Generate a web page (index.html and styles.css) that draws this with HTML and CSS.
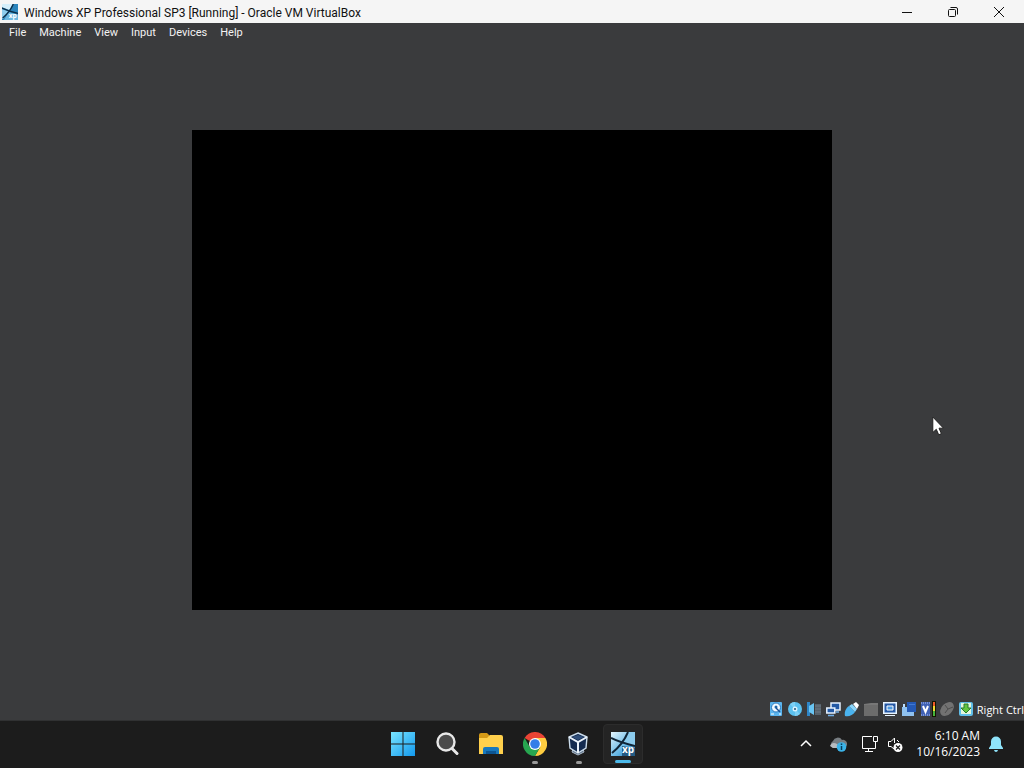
FILE: index.html
```html
<!DOCTYPE html>
<html lang="en">
<head>
    <meta charset="UTF-8">
    <title>Windows XP Professional SP3 [Running] - Oracle VM VirtualBox</title>
    <link rel="stylesheet" href="styles.css">
</head>
<body>
<div class="window">
    <header class="titlebar">
        <svg class="logo" viewBox="0 0 24 24">
            <path fill="#2b84bb" d="M0 0h24v24H0z"/>
            <path fill="#d5effb" d="M0 0h16l-5 9-11-4z"/>
            <path fill="#8fcdec" d="M0 8l9 3-7 11H0z"/>
            <path fill="#6db8e0" d="M10 12l14 4v8H3z"/>
            <path stroke="#0d2c45" stroke-width="2" fill="none" d="M0 6q10 5 24 8M17 0Q12 12 1 21"/>
            <text class="xp" x="10" y="21">xp</text>
        </svg>
        <h1>Windows XP Professional SP3 [Running] - Oracle VM VirtualBox</h1>
        <div class="controls">
            <button aria-label="Minimize"><svg viewBox="0 0 12 12"><path d="M1 6.5h10"/></svg></button>
            <button aria-label="Restore"><svg viewBox="0 0 12 12"><rect x="1.5" y="3.5" width="7" height="7" rx="1"/><path d="M3.5 1.5H9q1.5 0 1.5 1.5v5.5"/></svg></button>
            <button aria-label="Close"><svg viewBox="0 0 12 12"><path d="M1 1l10 10M11 1L1 11"/></svg></button>
        </div>
    </header>
    <nav class="menu">
        <a href="#">File</a>
        <a href="#">Machine</a>
        <a href="#">View</a>
        <a href="#">Input</a>
        <a href="#">Devices</a>
        <a href="#">Help</a>
    </nav>
    <main class="view">
        <div class="screen"></div>
        <svg class="cursor" viewBox="0 0 12 20"><path fill="#fff" stroke="#222" stroke-width="1" d="M.8 1v15.5l3.5-3.2 2.4 5.5 2.7-1.2L7 12.2h4.5z"/></svg>
    </main>
    <footer class="status">
        <!-- hard disk -->
        <svg viewBox="0 0 16 16"><rect x="2" y="1" width="12" height="14" rx="1" fill="#5ab4ee"/><circle cx="8" cy="6.5" r="4.5" fill="#f2faff" stroke="#2b79bd"/><circle cx="8" cy="6" r="1.5" fill="#1d65a8"/><path d="M8 7l4 4" stroke="#1d4f90" stroke-width="1.5" fill="none"/><path d="M3 13h3M11 13h2" stroke="#fff"/></svg>
        <!-- optical disk -->
        <svg viewBox="0 0 16 16"><circle cx="8" cy="8" r="7" fill="#5cc1f0"/><path d="M8 8L3 3a7 7 0 0 1 5-2zM8 8l5 5a7 7 0 0 1-5 2z" fill="#7dd0f6"/><circle cx="8" cy="8" r="2.5" fill="#d9f3ff"/><circle cx="8" cy="8" r="1" fill="#205276"/></svg>
        <!-- audio -->
        <svg viewBox="0 0 16 16"><path d="M1 1h3v14H1z" fill="#2e86c8"/><path d="M3 5l5-3v12l-5-3z" fill="#69c5f3"/><path d="M9 3h6v11H9z" fill="#56616a"/><path d="M9 5h6M9 8h6M9 11h6" stroke="#6d7983"/></svg>
        <!-- network -->
        <svg viewBox="0 0 16 16"><path d="M6 2h9v7H6z" fill="#2359a5" stroke="#e6f2ff" stroke-width="1.5"/><path d="M1.8 7h8v5h-8z" fill="#2359a5" stroke="#e6f2ff" stroke-width="1.5"/><path d="M3 14.5h6M11 11h3" stroke="#71aee8" stroke-width="1.5"/></svg>
        <!-- usb -->
        <svg viewBox="0 0 16 16"><path d="M1 15c-1-4 1-8 4-10l6 6c-2 3-6 5-10 4z" fill="#4ab3ef"/><path d="M5 5l3-2 5 5-2 3z" fill="#88d4fa"/><path d="M9 3l3-2 3 3-2 4z" fill="#fff"/></svg>
        <!-- shared folders -->
        <svg viewBox="0 0 16 16"><path d="M1 3l7-1h7v13H1z" fill="#777"/><path d="M1 4h14v11H1z" fill="#6c6c6c"/></svg>
        <!-- display -->
        <svg viewBox="0 0 16 16"><path d="M1 1h14v12H1zM3 14h10v1H3z" fill="#e8f4ff"/><path d="M2.5 2.5h11v9h-11z" fill="#2458a5"/><path d="M5 5h6v4H5z" fill="#4d9ae0" stroke="#fff"/></svg>
        <!-- recording -->
        <svg viewBox="0 0 16 16"><path d="M1 6h12v9H1z" fill="#90c2f0"/><path d="M6 1h9v10H6z" fill="#2459b5"/><path d="M2 3h2v3H2z" fill="#bddfff"/><path d="M8 3h6v1H8z" fill="#4279d0"/></svg>
        <!-- features and cpu load -->
        <svg viewBox="0 0 16 16"><path d="M1 1h9v14H1z" fill="#4061b5"/><path d="M1 2h9M1 14h9" stroke="#b0c3ee" stroke-dasharray="1 1"/><path d="M3 5l2.5 6L8 5" stroke="#fff" stroke-width="2" fill="none"/><path d="M12 0h4v16h-4z" fill="#151500"/><path d="M13 1h2v5h-2z" fill="#f05a28"/><path d="M13 5h2v5h-2z" fill="#f1da32"/><path d="M13 10h2v5h-2z" fill="#46b43c"/></svg>
        <!-- mouse integration -->
        <svg viewBox="0 0 16 16"><ellipse cx="8" cy="8" rx="8" ry="5.5" transform="rotate(-45 8 8)" fill="#727272"/><path d="M6 4l3 4 5-2M9 8l-3 4" stroke="#4d4d4d" fill="none"/></svg>
        <!-- keyboard capture -->
        <svg viewBox="0 0 16 16"><rect x="1" y="1" width="14" height="14" rx="2" fill="#60bee9"/><rect x="3" y="2" width="10" height="11" fill="#e4f6dd"/><path d="M6 3h4v4h3l-5 5-5-5h3z" fill="#62c43f" stroke="#267b2a"/></svg>
        <span>Right Ctrl</span>
    </footer>
</div>

<div class="taskbar">
    <div class="apps">
        <button aria-label="Start">
            <svg viewBox="0 0 24 24">
                <defs><linearGradient id="win" x1="0" y1="0" x2="24" y2="24" gradientUnits="userSpaceOnUse"><stop stop-color="#79e5ff"/><stop offset="1" stop-color="#1298ed"/></linearGradient></defs>
                <path fill="url(#win)" d="M0 0h11.5v11.5H0zM12.5 0H24v11.5H12.5zM0 12.5h11.5V24H0zM12.5 12.5H24V24H12.5z"/>
            </svg>
        </button>
        <button aria-label="Search">
            <svg viewBox="0 0 24 24"><circle cx="11" cy="10" r="8.5" fill="#4b4b4b" stroke="#e8e8e8" stroke-width="2.4"/><path d="M17 16.5l5 5" stroke="#e8e8e8" stroke-width="3" stroke-linecap="round"/></svg>
        </button>
        <button aria-label="File Explorer">
            <svg viewBox="0 0 24 24">
                <path fill="#d59a16" d="M0 3q0-2 2-2h6l3 3v4H0z"/>
                <path fill="#ffd04c" d="M0 6h8l3-3h11q2 0 2 2v17H0z"/>
                <path fill="#1778bd" d="M4 22v-5q0-2 2-2h12q2 0 2 2v5z"/>
                <path fill="#0c5593" d="M7 19h10v3H7z"/>
            </svg>
        </button>
        <button class="running" aria-label="Google Chrome">
            <svg viewBox="0 0 24 24">
                <path fill="#e94435" d="M12 12L1.6 6A12 12 0 0 1 22.4 6z"/>
                <path fill="#ffcd40" d="M12 12V6h10.4A12 12 0 0 1 12 24l5.2-9z"/>
                <path fill="#27a650" d="M12 12l5.2 3L12 24A12 12 0 0 1 1.6 6l5.2 9z"/>
                <circle cx="12" cy="12" r="6" fill="#fff"/><circle cx="12" cy="12" r="4.8" fill="#347de8"/>
            </svg>
        </button>
        <button class="running" aria-label="Oracle VM VirtualBox">
            <svg viewBox="0 0 24 24">
                <path d="M6 17l-1 3 6 3 6-3-1-3" fill="#5e7289" stroke="#aab8c8"/>
                <path d="M11 1l9 4-1 11-8 5-8-5L2 5z" fill="#142b50" stroke="#cbdceb" stroke-width="1.4"/>
                <path d="M2 5l9 5 9-5M11 10v11" fill="none" stroke="#e9f2fa" stroke-width="2"/>
                <path d="M5 5l6-2 6 2-6 3z" fill="#304f7b"/>
            </svg>
        </button>
        <button class="running active" aria-label="Windows XP Professional SP3">
            <svg viewBox="0 0 24 24">
                <defs><linearGradient id="xp" x1="0" y1="0" x2="24" y2="24" gradientUnits="userSpaceOnUse"><stop stop-color="#e5f7ff"/><stop offset=".6" stop-color="#63b5e4"/><stop offset="1" stop-color="#1d70aa"/></linearGradient></defs>
                <path fill="url(#xp)" d="M0 0h24v24H0z"/>
                <path fill="#8bcbed" d="M17 0h7v14l-12-4z"/>
                <path stroke="#102537" stroke-width="2" fill="none" d="M0 6q10 5 24 8M17 0Q12 12 1 21"/>
                <path fill="#245b84" d="M11 14l13 2v8H11z"/>
                <text class="xp" x="11" y="21">xp</text>
            </svg>
        </button>
    </div>
    <div class="tray">
        <button aria-label="Show hidden icons"><svg viewBox="0 0 18 18"><path d="M4 11l5-5 5 5" fill="none" stroke="#fff" stroke-width="1.5"/></svg></button>
        <button class="cloud" aria-label="OneDrive"><svg viewBox="0 0 18 18"><path d="M4 13a4 4 0 0 1 0-7 5 5 0 0 1 9-1 4 4 0 0 1 2 8z" fill="#777d82"/><path d="M1 11c1-3 4-4 7-2l4 4H4z" fill="#b8bcc0"/><circle cx="12.5" cy="12" r="4.8" fill="#3bb3e8"/><path d="M12.5 11v4M12.5 8.5V10" stroke="#073c5b" stroke-width="1.5"/></svg></button>
        <button aria-label="Network"><svg viewBox="0 0 18 18"><path d="M11 1.5H1.5v12H14.5V8M7.5 13.5v3M4 16.5h8M12.5 1.5h4v5h-4zM14.5 6.5v3" fill="none" stroke="#fff"/></svg></button>
        <button aria-label="Volume"><svg viewBox="0 0 18 18"><path d="M8 14L5 11.5H2.500v-5H5L8.5 3v5M11 5l2 2" fill="none" stroke="#fff"/><circle cx="12" cy="12.5" r="4.5" fill="#fff"/><path d="M10 10.5l4 4M14 10.5l-4 4" stroke="#1c1c1c" stroke-width="1.2"/></svg></button>
        <button class="clock"><time>6:10 AM<br>10/16/2023</time></button>
        <button class="bell" aria-label="Notifications"><svg viewBox="0 0 18 18"><path d="M9 1.5a5 5 0 0 1 5 5V10l2 3v1H2v-1l2-3V6.5a5 5 0 0 1 5-5zM7 15h4q-.5 2-2 2t-2-2z" fill="#8fe3fa"/></svg></button>
    </div>
</div>
</body>
</html>
```
FILE: styles.css
```css
*{
    box-sizing: border-box;
}
body{
    margin: 0;
    height: 100vh;
    display: flex;
    flex-direction: column;
    overflow: hidden;
    background: #3a3b3d;
    color: #fff;
    font-family: "Open Sans", "Noto Sans", sans-serif;
}
button{
    display: flex;
    align-items: center;
    justify-content: center;
    padding: 0;
    border: 0;
    background: none;
    color: inherit;
    font: inherit;
}
svg{
    display: block;
    flex: none;
}
.xp{
    font: bold 10px "Open Sans", sans-serif;
    fill: #fff;
}
.window{
    flex: 1;
    display: flex;
    flex-direction: column;
}
.titlebar{
    display: flex;
    align-items: center;
    height: 23px;
    padding-left: 2px;
    background: #f5f5f5;
    color: #111;
}
.logo{
    width: 16px;
    height: 16px;
}
.titlebar h1{
    flex: 1;
    margin: 0 0 0 6px;
    font-family: Roboto, sans-serif;
    font-size: 12px;
    font-weight: 400;
    line-height: 16px;
    padding-top: 2px;
}
.controls{
    display: flex;
    height: 20px;
    padding-right: 2px;
}
.controls button{
    width: 46px;
}
.controls svg{
    width: 12px;
    height: 12px;
    fill: none;
    stroke: #111;
}
.menu{
    display: flex;
    gap: 13px;
    height: 19px;
    padding-left: 9px;
    font-family: Roboto, sans-serif;
    font-size: 11px;
    line-height: 20px;
}
.menu a{
    color: #f2f2f2;
    text-decoration: none;
}
.view{
    position: relative;
    flex: 1;
    display: flex;
    align-items: center;
    justify-content: center;
}
.screen{
    width: 62.5%;
    aspect-ratio: 4 / 3;
    background: #000;
}
.cursor{
    position: absolute;
    left: 91%;
    top: 57%;
    width: 12px;
    height: 20px;
}
.status{
    display: flex;
    align-items: center;
    justify-content: flex-end;
    gap: 3px;
    height: 22px;
    font-size: 11px;
}
.status svg{
    width: 16px;
    height: 16px;
}
.taskbar{
    display: grid;
    grid-template-columns: 1fr auto 1fr;
    align-items: center;
    height: 48px;
    padding-bottom: 1px;
    border-top: 1px solid #303132;
    background: #1c1c1c;
}
.apps{
    grid-column: 2;
    display: flex;
    gap: 4px;
    padding-left: 2px;
}
.apps button{
    position: relative;
    width: 40px;
    height: 40px;
    border-radius: 4px;
}
.apps svg{
    width: 24px;
    height: 24px;
}
.apps .active{
    background: #242424;
    border: 1px solid #2c2c2c;
}
.running::after{
    content: "";
    position: absolute;
    bottom: 0;
    width: 6px;
    height: 3px;
    border-radius: 2px;
    background: #999;
}
.active::after{
    width: 16px;
    background: #4cb9ea;
}
.tray{
    display: flex;
    align-items: center;
    justify-content: flex-end;
    gap: 7px;
    padding-right: 19px;
}
.tray svg{
    width: 18px;
    height: 18px;
}
.tray .cloud{
    margin: 0 7px;
}
.tray .clock{
    margin-left: 5px;
    font-size: 12px;
    line-height: 16px;
    text-align: right;
}
```
